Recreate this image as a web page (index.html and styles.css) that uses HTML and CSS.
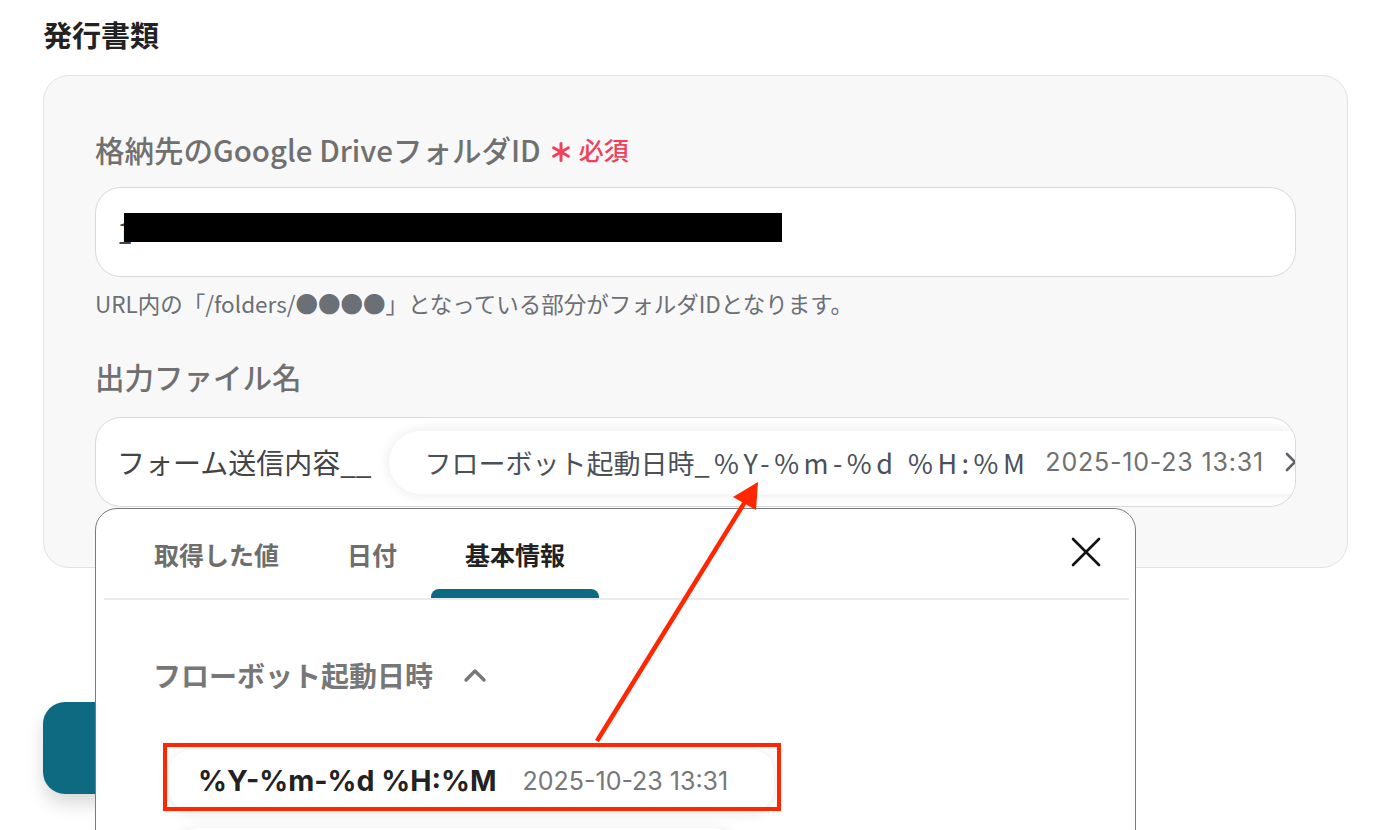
FILE: index.html
```html
<!DOCTYPE html>
<html lang="ja">
<head>
<meta charset="utf-8">
<title>発行書類</title>
<link rel="stylesheet" href="styles.css">
</head>
<body>
<div class="page">
  <h2 class="title">発行書類</h2>
  <section class="card">
    <div class="field">
      <label class="label">格納先のGoogle DriveフォルダID<span class="req"><svg class="ast" width="20" height="20" viewBox="0 0 20 20"><path d="M10 1.5 V18.5 M2.6 5.75 L17.4 14.25 M2.6 14.25 L17.4 5.75" stroke="#f2405a" stroke-width="3" stroke-linecap="round"/></svg>必須</span></label>
      <div class="input">
        <span class="val">1</span>
        <span class="redact"></span>
      </div>
      <p class="help">URL内の「/folders/●●●●」となっている部分がフォルダIDとなります。</p>
    </div>
    <div class="field field-2">
      <label class="label">出力ファイル名</label>
      <div class="input input-tags">
        <span class="val">フォーム送信内容__</span>
        <span class="chip">
          <span class="chip-text">フローボット起動日時<span class="chip-latin">_%Y-%m-%d %H:%M</span></span>
          <span class="chip-date">2025-10-23 13:31</span>
          <svg class="chip-chev" width="14" height="24" viewBox="0 0 14 24"><polyline points="3,4 11,12 3,20" fill="none" stroke="#5f6368" stroke-width="2.6" stroke-linecap="round" stroke-linejoin="round"/></svg>
        </span>
      </div>
    </div>
  </section>
  <div class="btn"></div>

  <div class="popup">
    <div class="tabs">
      <div class="tab">取得した値</div>
      <div class="tab">日付</div>
      <div class="tab active">基本情報</div>
      <svg class="close" width="32" height="32" viewBox="0 0 32 32"><path d="M3 3 L29 29 M29 3 L3 29" stroke="#111" stroke-width="2.6" stroke-linecap="round"/></svg>
    </div>
    <div class="popup-body">
      <div class="group-head">
        <span>フローボット起動日時</span>
        <svg class="chev-up" width="24" height="16" viewBox="0 0 24 16"><polyline points="3,13 12,4 21,13" fill="none" stroke="#777" stroke-width="3.4" stroke-linecap="round" stroke-linejoin="round"/></svg>
      </div>
      <div class="items">
        <div class="item">
          <span class="item-key">%Y-%m-%d %H:%M</span>
          <span class="item-val">2025-10-23 13:31</span>
        </div>
        <div class="item item-next"></div>
      </div>
    </div>
  </div>

  <svg class="annot" width="1380" height="830" viewBox="0 0 1380 830">
    <rect x="165" y="745" width="614" height="64" fill="none" stroke="#ff2600" stroke-width="4"/>
    <line x1="597" y1="741" x2="748" y2="497" stroke="#ff2600" stroke-width="4.5"/>
    <polygon points="758,482 733,497 756,510" fill="#ff2600"/>
  </svg>
</div>
</body>
</html>
```
FILE: styles.css
```css
* { box-sizing: border-box; }
html, body {
  margin: 0;
  padding: 0;
  background: #ffffff;
  overflow: hidden;
}
body {
  width: 1380px;
  height: 830px;
  font-family: Inter, "Noto Sans CJK JP", sans-serif;
  color: #222;
}
.page {
  position: relative;
  width: 1380px;
  height: 830px;
  padding: 14px 33px 0 43px;
}
.title {
  margin: 0;
  font-size: 29px;
  line-height: 40px;
  font-weight: 700;
  color: #222;
  font-family: "Noto Sans CJK JP", sans-serif;
}
.card {
  margin-top: 21px;
  width: 1305px;
  background: #f8f8f8;
  border: 1px solid #e1e3e7;
  border-radius: 26px;
  padding: 53px 51px 60px 51px;
}
.field { display: flex; flex-direction: column; }
.field-2 { margin-top: 38px; }
.label {
  font-family: "Noto Sans CJK JP", sans-serif;
  font-size: 29.5px;
  line-height: 40px;
  font-weight: 500;
  color: #707070;
  display: flex;
  align-items: center;
}
.req {
  color: #f2405a;
  margin-left: 10px;
  display: inline-flex;
  align-items: center;
  font-size: 25px;
  font-weight: 500;
}
.ast {
  margin-right: 8px;
  position: relative;
  top: 3px;
}
.input {
  position: relative;
  margin-top: 18px;
  height: 90px;
  background: #fff;
  border: 1.5px solid #d6d9de;
  border-radius: 26px;
  display: flex;
  align-items: center;
  padding-left: 21px;
  overflow: hidden;
}
.field-2 .input { margin-top: 21px; }
.val {
  font-family: "Noto Sans CJK JP", sans-serif;
  font-size: 28px;
  color: #444;
  white-space: nowrap;
  flex-shrink: 0;
}
.redact {
  position: absolute;
  left: 28px;
  top: 25px;
  width: 658px;
  height: 29px;
  background: #000;
}
.help {
  margin: 11px 0 0 0;
  font-family: "Noto Sans CJK JP", sans-serif;
  font-size: 22.5px;
  line-height: 30px;
  color: #6b6f76;
}
.chip {
  flex-shrink: 0;
  margin-left: 18px;
  height: 63px;
  border-radius: 32px;
  background: #fff;
  box-shadow: 0 0 14px rgba(0,0,0,0.09);
  display: flex;
  align-items: center;
  padding-left: 35px;
  padding-right: 40px;
  white-space: nowrap;
}
.chip-text {
  font-family: "Noto Sans CJK JP", sans-serif;
  font-size: 27px;
  color: #4a5058;
}
.chip-latin { letter-spacing: 4.5px; }
.chip-date {
  margin-left: 16px;
  font-family: Inter, sans-serif;
  font-size: 25px;
  letter-spacing: 0.8px;
  color: #707070;
}
.chip-chev { margin-left: 20px; }
.btn {
  margin-top: 134px;
  width: 140px;
  height: 92px;
  border-radius: 22px;
  background: #0e6a81;
  box-shadow: 0 10px 18px rgba(0,0,0,0.15);
}
.popup {
  position: absolute;
  left: 95px;
  top: 508px;
  width: 1041px;
  height: 420px;
  background: #fff;
  border: 1.5px solid #7b7b7b;
  border-radius: 22px;
}
.tabs {
  position: relative;
  margin: 9px 6px 0 8px;
  padding-left: 16px;
  display: flex;
  border-bottom: 2px solid #ebebeb;
}
.tab {
  height: 80px;
  padding: 0 34px 9px 34px;
  display: flex;
  align-items: center;
  font-family: "Noto Sans CJK JP", sans-serif;
  font-size: 25px;
  font-weight: 700;
  color: #6e6e6e;
  position: relative;
}
.tab.active { color: #222; }
.tab.active::after {
  content: "";
  position: absolute;
  left: 0;
  right: 0;
  bottom: 0;
  height: 9px;
  background: #0e6a81;
  border-radius: 8px 8px 0 0;
}
.close {
  position: absolute;
  right: 27px;
  top: 18px;
}
.popup-body {
  padding: 55px 0 0 57px;
}
.group-head {
  display: flex;
  align-items: center;
  height: 40px;
  font-family: "Noto Sans CJK JP", sans-serif;
  font-size: 28px;
  font-weight: 700;
  color: #777;
}
.chev-up { margin-left: 30px; }
.items {
  margin-top: 55px;
  padding-left: 16px;
  display: flex;
  flex-direction: column;
  gap: 17px;
  align-items: flex-start;
}
.item {
  height: 61px;
  padding: 0 46px 0 29px;
  border-radius: 22px;
  background: #fff;
  box-shadow: 0 2px 14px rgba(0,0,0,0.10);
  display: flex;
  align-items: center;
  white-space: nowrap;
}
.item-next { width: 560px; margin-left: 7px; }
.item-key {
  font-family: Inter, sans-serif;
  font-weight: 700;
  font-size: 28.5px;
  color: #222;
}
.item-val {
  margin-left: 26px;
  font-family: Inter, sans-serif;
  font-size: 25px;
  color: #777;
}
.annot {
  position: absolute;
  left: 0;
  top: 0;
  pointer-events: none;
}
```
